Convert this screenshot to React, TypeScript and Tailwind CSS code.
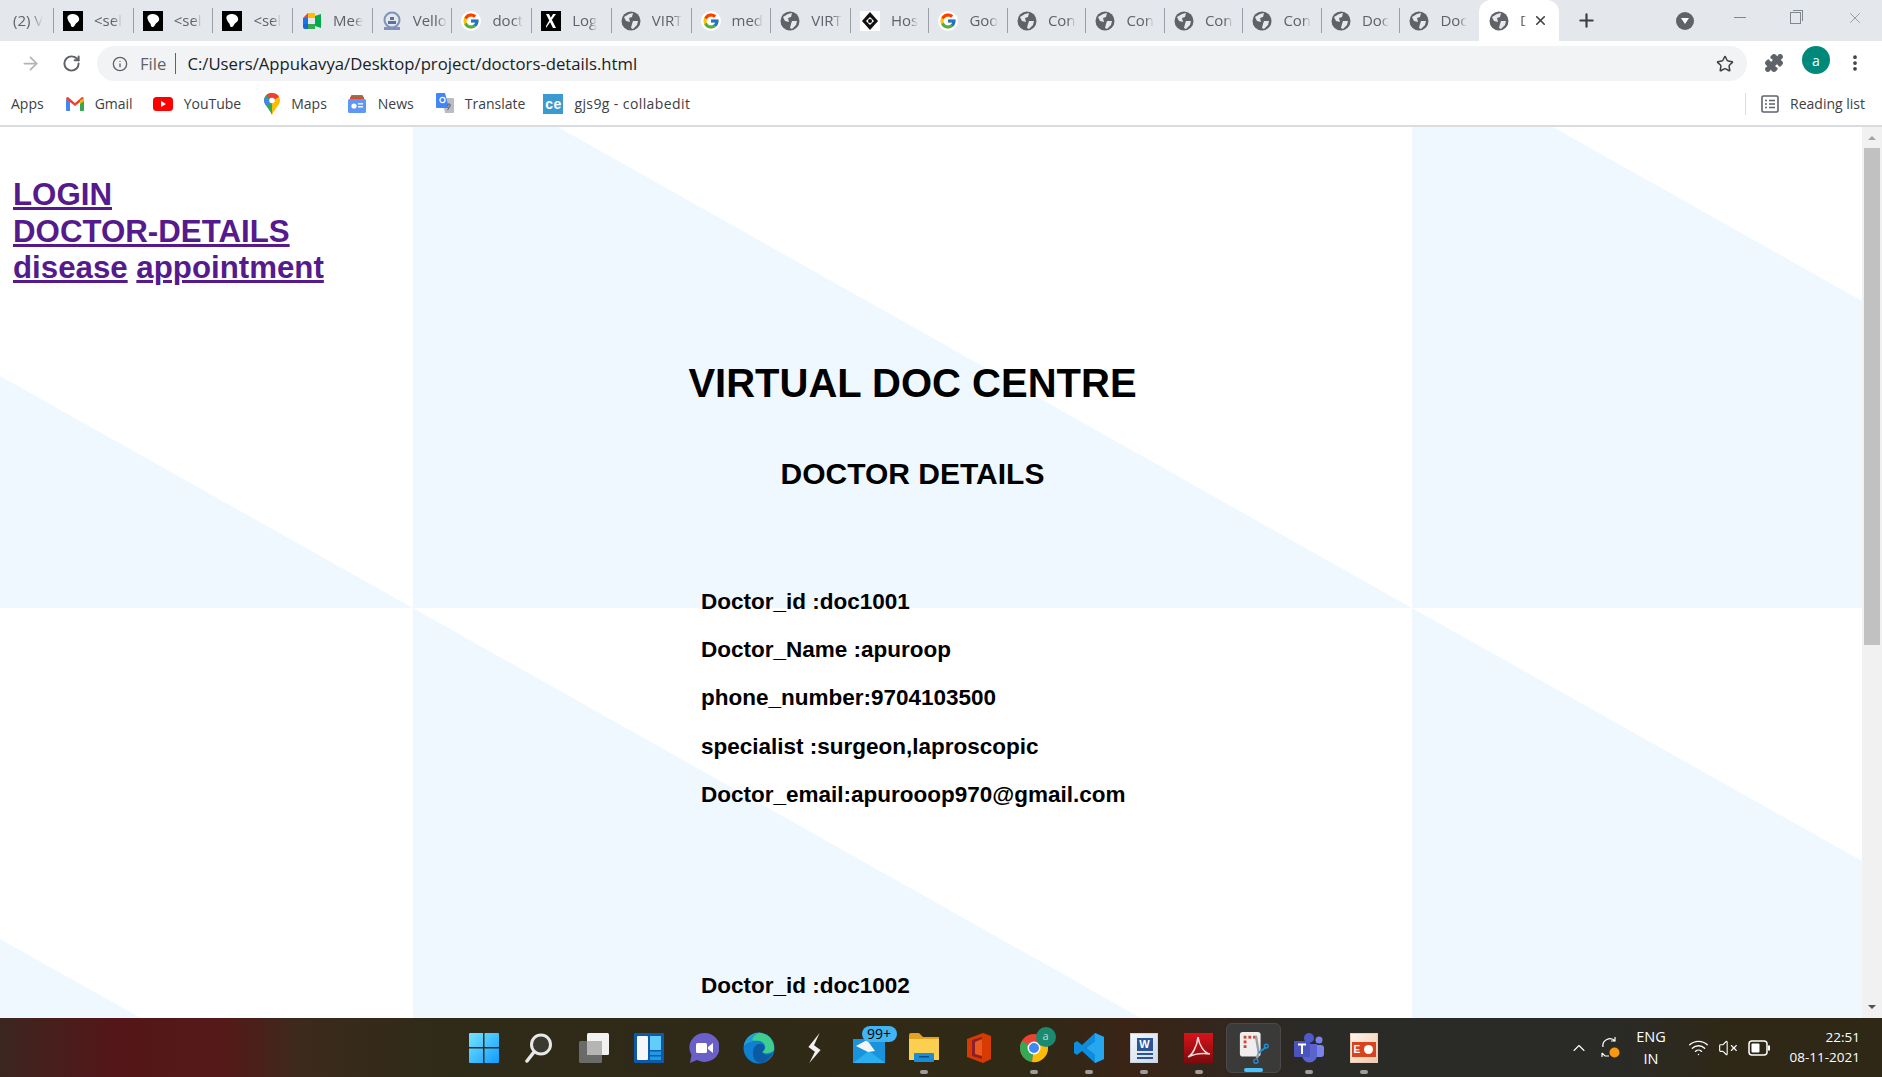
import { ArrowRight, ChevronUp, Info, MoreVertical, Plus, Puzzle, RotateCw, Star, VolumeX, Wifi, X } from "lucide-react";
import { ReactNode } from "react";
import { FcGoogle } from "react-icons/fc";

const chromeFont = "font-['Open_Sans','Noto_Sans',sans-serif]";

function Globe() {
  return (
    <svg viewBox="0 0 20 20" className="h-5 w-5">
      <circle cx="10" cy="10" r="9.5" fill="#5f6368" />
      <path d="M3 6 L8 3 L12 2 L11 6 L8 7 L9 11 L5 10 Z" fill="#e6e8eb" />
      <path d="M12 10 L17 10 L16 14 L12 18 L10 17 L11 13 Z" fill="#e6e8eb" />
    </svg>
  );
}

function BlackMark() {
  return (
    <svg viewBox="0 0 20 20" className="h-5 w-5">
      <rect width="20" height="20" fill="#000" />
      <path d="M6 4 C9 2 15 3 16 7 C17 11 13 11 12 14 C11 16 9 17 8 15 C8 12 6 12 5 9 C4 7 4 5 6 4 Z" fill="#fff" />
    </svg>
  );
}

function MeetIcon() {
  return (
    <svg viewBox="0 0 20 20" className="h-5 w-5">
      <path d="M1 7 L6 2 L6 7 Z" fill="#ea4335" />
      <rect x="6" y="2" width="7" height="5" fill="#fbbc04" />
      <rect x="1" y="7" width="5" height="6" fill="#1a73e8" />
      <path d="M1 13 H6 V18 H3 Q1 18 1 16 Z" fill="#1967d2" />
      <rect x="6" y="13" width="7" height="5" fill="#34a853" />
      <path d="M13 5 L19 3 V17 L13 15 Z" fill="#00ac47" />
    </svg>
  );
}

function CrestIcon() {
  return (
    <svg viewBox="0 0 20 20" className="h-5 w-5">
      <circle cx="10" cy="9" r="7.5" fill="none" stroke="#7f93b8" strokeWidth="2" />
      <path d="M6 10 H14 V13 H6 Z M8 6 H12 V9 H8 Z" fill="#5872a3" />
      <path d="M2 16 H18 V19 H2 Z" fill="#7f93b8" />
    </svg>
  );
}

function XMark() {
  return (
    <svg viewBox="0 0 20 20" className="h-5 w-5">
      <rect width="20" height="20" fill="#000" />
      <path d="M5 3 H8 L15 17 H12 Z M12 3 H15 L5 17 V15 Z" fill="#fff" />
    </svg>
  );
}

function HexMark() {
  return (
    <svg viewBox="0 0 20 20" className="h-5 w-5">
      <rect width="20" height="20" fill="#fff" />
      <path d="M10 1 L18 10 L10 19 L2 10 Z" fill="#111" />
      <path d="M10 6 L14 10 L10 14 L6 10 Z" fill="#fff" />
      <circle cx="10" cy="10" r="2" fill="#111" />
    </svg>
  );
}

function GoogleIcon() {
  return (
    <span className="flex h-5 w-5 items-center justify-center rounded-full bg-white">
      <FcGoogle size={18} />
    </span>
  );
}

interface TabInfo {
  icon: ReactNode;
  title: string;
}

// titles as far as they can be read in the squeezed tabs
const tabs: TabInfo[] = [
  { icon: <BlackMark />, title: "<sel" },
  { icon: <BlackMark />, title: "<sel" },
  { icon: <BlackMark />, title: "<sel" },
  { icon: <MeetIcon />, title: "Mee" },
  { icon: <CrestIcon />, title: "Vello" },
  { icon: <GoogleIcon />, title: "doct" },
  { icon: <XMark />, title: "Log" },
  { icon: <Globe />, title: "VIRT" },
  { icon: <GoogleIcon />, title: "med" },
  { icon: <Globe />, title: "VIRT" },
  { icon: <HexMark />, title: "Hos" },
  { icon: <GoogleIcon />, title: "Goo" },
  { icon: <Globe />, title: "Con" },
  { icon: <Globe />, title: "Con" },
  { icon: <Globe />, title: "Con" },
  { icon: <Globe />, title: "Con" },
  { icon: <Globe />, title: "Doc" },
  { icon: <Globe />, title: "Doc" },
];

function TabBar() {
  return (
    <div className={`flex h-[41px] shrink-0 items-center bg-[#e4e7eb] text-[15px] text-[#5f6368] ${chromeFont}`}>
      <div className="flex h-[25px] w-[54px] items-center border-r border-[#9aa0a6] pl-[13px]">
        <span className="whitespace-nowrap [mask-image:linear-gradient(to_right,black_60%,transparent)]">(2) V</span>
      </div>
      {tabs.map((t, i) => (
        <div key={i} className={`flex h-[25px] shrink-0 items-center gap-[11px] pl-[9px] ${i < 10 ? "w-[79.7px]" : "w-[78.5px]"} ${i < 17 ? "border-r border-[#9aa0a6]" : ""}`}>
          <span className="shrink-0">{t.icon}</span>
          <span className="whitespace-nowrap [mask-image:linear-gradient(to_right,black_70%,transparent)]">{t.title}</span>
        </div>
      ))}
      <div className="flex h-[41px] w-[80px] shrink-0 items-center rounded-t-xl bg-white pl-[10px]">
        <Globe />
        <span className="ml-[11px] w-[6px] text-[#5f6368] [mask-image:linear-gradient(to_right,black_60%,transparent)]">D</span>
        <X size={15} strokeWidth={2.5} className="ml-[7px] text-[#3c4043]" />
      </div>
      <Plus size={21} strokeWidth={2.5} className="ml-[17px] text-[#3c4043]" />
      <div className="ml-[79px] flex h-[18px] w-[18px] items-center justify-center rounded-full bg-[#5f6368]">
        <div className="h-0 w-0 border-x-[4px] border-t-[6px] border-x-transparent border-t-white" />
      </div>
      <div className="mb-[6px] ml-[40px] h-px w-[12px] bg-[#80868b]" />
      <div className="relative mb-[6px] ml-[44px] h-[12px] w-[11px] border border-[#80868b]">
        <div className="absolute -right-[3px] -top-[3px] h-[11px] w-[10px] border-r border-t border-[#80868b]" />
      </div>
      <X size={18} strokeWidth={1} className="mb-[6px] ml-[45px] text-[#80868b]" />
    </div>
  );
}

function Toolbar() {
  return (
    <div className={`flex h-[44px] shrink-0 items-start bg-white pt-[5px] ${chromeFont}`}>
      <ArrowRight size={21} strokeWidth={2} className="ml-[20px] mt-[7px] text-[#b0b3b8]" />
      <RotateCw size={19} strokeWidth={2.5} className="ml-[21px] mt-[8px] text-[#5f6368]" />
      <div className="ml-[16px] flex h-[35px] w-[1650px] items-center rounded-full bg-[#f1f3f4] pl-[15px] text-[16.7px]">
        <Info size={16} strokeWidth={2} className="text-[#5f6368]" />
        <span className="ml-[12px] text-[#5f6368]">File</span>
        <div className="ml-[9px] h-[21px] w-px bg-[#5f6368]" />
        <span className="ml-[11px] text-[#202124]">C:/Users/Appukavya/Desktop/project/doctors-details.html</span>
        <Star size={18} strokeWidth={2} className="ml-auto mr-[13px] text-[#3c4043]" />
      </div>
      <Puzzle size={20} fill="#5f6368" strokeWidth={1.5} className="ml-[17px] mt-[7px] text-[#5f6368]" />
      <div className="ml-[18px] flex h-[28px] w-[28px] items-center justify-center rounded-full bg-[#00897b] text-[14px] text-white">a</div>
      <MoreVertical size={20} strokeWidth={2.5} className="ml-[15px] mt-[7px] text-[#3c4043]" />
    </div>
  );
}

function GmailIcon() {
  return (
    <svg viewBox="0 0 18 14" className="h-[14px] w-[18px]">
      <path d="M0 2 L4 4 V14 H1 Q0 14 0 13 Z" fill="#4285f4" />
      <path d="M14 4 L18 2 V13 Q18 14 17 14 H14 Z" fill="#34a853" />
      <path d="M0 2 Q0 0 2 0 L9 6 L16 0 Q18 0 18 2 L9 9 Z" fill="#ea4335" />
      <path d="M14 3.5 L18 1 V4 L14 7 Z" fill="#fbbc04" />
    </svg>
  );
}

function YoutubeIcon() {
  return (
    <svg viewBox="0 0 20 14" className="h-[14px] w-5">
      <rect width="20" height="14" rx="3.5" fill="#ff0000" />
      <path d="M8 4 L13 7 L8 10 Z" fill="#fff" />
    </svg>
  );
}

function MapsIcon() {
  return (
    <svg viewBox="0 0 16 22" className="h-[22px] w-4">
      <path d="M8 0 C3 0 0 3.5 0 7.5 C0 12 5 15 8 22 Z" fill="#34a853" />
      <path d="M8 0 C13 0 16 3.5 16 7.5 C16 12 11 15 8 22 Z" fill="#fbbc04" />
      <path d="M2 2.5 C4 0.5 6 0 8 0 C11 0 14 1.5 15 4 L8 8 Z" fill="#ea4335" />
      <path d="M1 4 L8 8 L3 13 C1 11 0 9 0 7.5 Z" fill="#4285f4" />
      <circle cx="8" cy="7.5" r="2.8" fill="#fff" />
    </svg>
  );
}

function NewsIcon() {
  return (
    <svg viewBox="0 0 20 20" className="h-5 w-5">
      <rect x="4" y="1" width="12" height="8" rx="1" fill="#34a853" />
      <rect x="3" y="2.5" width="14" height="6" rx="1" fill="#ea4335" />
      <rect x="1" y="5" width="18" height="14" rx="1.5" fill="#5e97f6" />
      <rect x="11" y="9" width="5" height="1.6" fill="#e3f0ff" />
      <rect x="11" y="12" width="5" height="1.6" fill="#e3f0ff" />
      <circle cx="7" cy="12" r="2.6" fill="#fff" />
    </svg>
  );
}

function TranslateIcon() {
  return (
    <svg viewBox="0 0 18 22" className="h-[22px] w-[18px]">
      <path d="M6 5 H17 Q18 5 18 6 V19 Q18 20 17 20 H9 Z" fill="#b9bdc2" />
      <path d="M1 0 H9 L13 15 H1 Q0 15 0 14 V1 Q0 0 1 0 Z" fill="#4285f4" />
      <circle cx="6.5" cy="7" r="2.6" fill="none" stroke="#fff" strokeWidth="1.2" />
      <path d="M11 12 L15 12 M13 10 V12 M11.5 17 L14.5 12.5" stroke="#5f6368" strokeWidth="1" fill="none" />
    </svg>
  );
}

function BookmarksBar() {
  const items: { icon: ReactNode; label: string; gap: string }[] = [
    { icon: <GmailIcon />, label: "Gmail", gap: "ml-[22px]" },
    { icon: <YoutubeIcon />, label: "YouTube", gap: "ml-[20px]" },
    { icon: <MapsIcon />, label: "Maps", gap: "ml-[23px]" },
    { icon: <NewsIcon />, label: "News", gap: "ml-[20px]" },
    { icon: <TranslateIcon />, label: "Translate", gap: "ml-[22px]" },
    {
      icon: (
        <span className="flex h-5 w-5 items-center justify-center bg-[#3b9bcf] font-['Liberation_Sans',sans-serif] text-[14px] font-bold leading-none text-white">
          ce
        </span>
      ),
      label: "gjs9g - collabedit",
      gap: "ml-[18px] tracking-[0.4px]",
    },
  ];
  return (
    <div className={`flex h-[42px] shrink-0 items-center border-b-2 border-[#dadce0] bg-white pb-[3px] pl-[11px] text-[14px] text-[#3c4043] ${chromeFont}`}>
      <span>Apps</span>
      {items.map((it) => (
        <div key={it.label} className={`flex items-center gap-[11px] ${it.gap}`}>
          {it.icon}
          <span>{it.label}</span>
        </div>
      ))}
      <div className="ml-auto flex h-[22px] items-center border-l border-[#dadce0] pl-[15px] pr-[17px]">
        <svg viewBox="0 0 18 18" className="h-[18px] w-[18px]">
          <rect x="1" y="1" width="16" height="16" rx="1.5" fill="none" stroke="#5f6368" strokeWidth="1.6" />
          <path d="M4 5.5 H6 M8 5.5 H14 M4 9 H6 M8 9 H14 M4 12.5 H6 M8 12.5 H14" stroke="#5f6368" strokeWidth="1.4" />
        </svg>
        <span className="ml-[11px]">Reading list</span>
      </div>
    </div>
  );
}

function PageBackground() {
  return (
    <svg viewBox="0 127 1862 891" className="absolute inset-0 h-full w-full">
      <g fill="#f0f8ff">
        <polygon points="0,376 413,608 0,608" />
        <polygon points="413,127 558,127 1412,608 413,608" />
        <polygon points="1412,127 1553,127 1862,301 1862,608 1412,608" />
        <polygon points="0,939 141,1018 0,1018" />
        <polygon points="413,608 1141,1018 413,1018" />
        <polygon points="1412,608 1862,861 1862,1018 1412,1018" />
      </g>
    </svg>
  );
}

const doctor = [
  "Doctor_id :doc1001",
  "Doctor_Name :apuroop",
  "phone_number:9704103500",
  "specialist :surgeon,laproscopic",
  "Doctor_email:apurooop970@gmail.com",
];

function Page() {
  const link = "text-[#551a8b] underline";
  return (
    <div className="relative flex-1 overflow-hidden bg-white font-['Liberation_Sans',Arial,sans-serif] font-bold text-black">
      <PageBackground />
      <div className="relative">
        <nav className="pl-[13px] pt-[50px] text-[31.25px] leading-[36.5px]">
          <div><a className={link}>LOGIN</a></div>
          <div><a className={link}>DOCTOR-DETAILS</a></div>
          <div>
            <a className={link}>disease</a> <a className={link}>appointment</a>
          </div>
        </nav>
        <div className="ml-[413px] w-[999px]">
          <h1 className="mt-[73px] text-center text-[40px] leading-[46px]">VIRTUAL DOC CENTRE</h1>
          <h2 className="mt-[51px] text-center text-[30px] leading-[34.5px]">DOCTOR DETAILS</h2>
          <div className="ml-[288px] mt-[96.5px] flex flex-col gap-[20.8px] text-[22.5px] leading-[27.67px]">
            {doctor.map((line) => (
              <p key={line}>{line}</p>
            ))}
          </div>
          <p className="ml-[288px] mt-[163.3px] text-[22.5px] leading-[27.67px]">Doctor_id :doc1002</p>
        </div>
      </div>
    </div>
  );
}

function Scrollbar() {
  return (
    <div className="flex w-5 shrink-0 flex-col items-center bg-[#f1f1f1]">
      <div className="mt-[9px] h-0 w-0 border-x-[4px] border-b-[4px] border-x-transparent border-b-[#a3a3a3]" />
      <div className="mt-[8px] h-[497px] w-4 bg-[#c1c1c1]" />
      <div className="mt-auto mb-[9px] h-0 w-0 border-x-[4px] border-t-[4px] border-x-transparent border-t-[#505050]" />
    </div>
  );
}

function StartIcon() {
  return (
    <svg viewBox="0 0 30 30" className="h-[30px] w-[30px]">
      <defs>
        <linearGradient id="st" x1="0" y1="0" x2="1" y2="1">
          <stop offset="0" stopColor="#76e4ff" />
          <stop offset="1" stopColor="#0f9cff" />
        </linearGradient>
      </defs>
      <path d="M0 1 Q0 0 1 0 H14 V14 H0 Z M15.5 0 H29 Q30 0 30 1 V14 H15.5 Z M0 15.5 H14 V30 H1 Q0 30 0 29 Z M15.5 15.5 H30 V29 Q30 30 29 30 H15.5 Z" fill="url(#st)" />
    </svg>
  );
}

function SearchIcon() {
  return (
    <svg viewBox="0 0 28 30" className="h-[30px] w-[28px]">
      <circle cx="16" cy="11.5" r="9.5" fill="#3b3a30" stroke="#e8e8e8" strokeWidth="3" />
      <path d="M9 19 L2 28" stroke="#e8e8e8" strokeWidth="3.5" strokeLinecap="round" />
    </svg>
  );
}

function TaskViewIcon() {
  return (
    <svg viewBox="0 0 30 30" className="h-[30px] w-[30px]">
      <rect x="0" y="8" width="23" height="22" rx="1.5" fill="#6a6a68" />
      <rect x="8" y="0" width="22" height="22" rx="1.5" fill="#f2f2f2" />
      <rect x="8" y="8" width="15" height="14" fill="#b5b5b3" />
    </svg>
  );
}

function WidgetsIcon() {
  return (
    <svg viewBox="0 0 30 30" className="h-[30px] w-[30px]">
      <rect width="30" height="30" rx="1" fill="#0d5aa7" />
      <rect x="3" y="3" width="11" height="24" rx="1" fill="#f5f7fa" />
      <rect x="16" y="3" width="11" height="14" fill="#62cdfb" />
      <rect x="16" y="18.5" width="11" height="3.5" fill="#1c9be6" />
      <rect x="16" y="23.5" width="11" height="3.5" fill="#1c9be6" />
    </svg>
  );
}

function ChatIcon() {
  return (
    <svg viewBox="0 0 30 30" className="h-[30px] w-[30px]">
      <path d="M15 0 A15 14.5 0 1 1 8 27 L1 30 L2.5 22 A15 14.5 0 0 1 15 0 Z" fill="#6b5fc9" />
      <rect x="7" y="10" width="11" height="10" rx="1.5" fill="#fff" />
      <path d="M19 14 L24 10 V20 L19 16 Z" fill="#fff" />
    </svg>
  );
}

function EdgeIcon() {
  return (
    <svg viewBox="0 0 32 32" className="h-[32px] w-[32px]">
      <circle cx="16" cy="16" r="15.5" fill="#0f7fcf" />
      <path d="M1 14 C3 4 12 0 18 1 C26 2 32 9 31 18 C28 22 22 22 19 20 C24 17 23 11 17 9 C10 8 3 10 1 14 Z" fill="#3ecf8e" />
      <path d="M1 14 C3 5 11 1 16 1 C9 4 8 9 11 9 C7 9 3 10 1 14 Z" fill="#1d9be0" />
      <path d="M10 21 C10 14 15 11 19 12 C23 14 22 18 19 20 C22 24 27 23 30 20 C27 28 21 31 17 31 C12 30 10 26 10 21 Z" fill="#0c59a4" />
    </svg>
  );
}

function StarkIcon() {
  return (
    <svg viewBox="0 0 14 32" className="h-[30px] w-[14px]">
      <path d="M13 0 L1 15 L8 20 L2 32 L14 18 L7 13 Z" fill="#f2f2f2" />
    </svg>
  );
}

function MailIcon() {
  return (
    <span className="relative block h-[30px] w-[32px]">
      <svg viewBox="0 0 32 26" className="absolute bottom-0 h-[26px] w-[32px]">
        <rect y="2" width="32" height="24" fill="#1993dc" />
        <path d="M0 26 L16 14 L32 26 Z" fill="#2ab0ee" />
        <path d="M3 9 L14 3 L22 14 L15 15 Z" fill="#f4f4f4" />
      </svg>
      <span className="absolute -top-[7px] left-[9px] flex h-[16px] w-[35px] items-center justify-center rounded-full bg-[#40b4f5] font-['Open_Sans',sans-serif] text-[14px] text-black">
        99+
      </span>
    </span>
  );
}

function FolderIcon() {
  return (
    <svg viewBox="0 0 30 29" className="h-[29px] w-[30px]">
      <path d="M0 2 Q0 0 2 0 H10 L14 4 H30 V27 H0 Z" fill="#e0a420" />
      <rect y="6" width="30" height="21" fill="#fbcf4f" />
      <rect x="5" y="20" width="20" height="9" rx="1" fill="#1a8dd8" />
      <rect x="10" y="23" width="10" height="1.5" fill="#0d4d8a" />
    </svg>
  );
}

function OfficeIcon() {
  return (
    <svg viewBox="0 0 24 30" className="h-[30px] w-[24px]">
      <path d="M0 6 L16 0 L24 3 V26 L16 30 L0 24 Z" fill="#d83b01" />
      <path d="M5 7 L15 4 V26 L5 23 Z" fill="#8d1f2a" />
      <path d="M8 9 L15 6 V23 L8 21 Z" fill="#e85a1e" />
    </svg>
  );
}

function ChromeIcon() {
  return (
    <span className="relative block h-[30px] w-[30px]">
      <svg viewBox="0 0 30 30" className="h-[30px] w-[30px]">
        <circle cx="15" cy="15" r="14" fill="#ea4335" />
        <path d="M15 15 L3 8 A14 14 0 0 0 13 29 Z" fill="#34a853" />
        <path d="M15 15 L28 10 A14 14 0 0 1 13 29 Z" fill="#fbbc04" />
        <circle cx="15" cy="15" r="6.5" fill="#fff" />
        <circle cx="15" cy="15" r="5" fill="#4285f4" />
      </svg>
      <span className="absolute -right-[7px] -top-[6px] flex h-[20px] w-[20px] items-center justify-center rounded-full bg-[#1a8a70] font-['Open_Sans',sans-serif] text-[11px] text-white/70">
        a
      </span>
    </span>
  );
}

function VsCodeIcon() {
  return (
    <svg viewBox="0 0 30 30" className="h-[30px] w-[30px]">
      <path d="M21 0 L30 4 V26 L21 30 L8 18 L3 22 L0 20 V10 L3 8 L8 12 Z M21 8 L12 15 L21 22 Z" fill="#0c8ee0" />
      <path d="M21 0 L30 4 V26 L21 30 Z M21 8 V22 L12 15 Z" fill="#26a8f0" fillRule="evenodd" />
    </svg>
  );
}

function WordIcon() {
  return (
    <span className="relative block h-[30px] w-[28px] border border-[#c9d3e2] bg-[linear-gradient(135deg,#f5f8fc,#cfd9e8)]">
      <span className="absolute left-[6px] top-[4px] flex h-[13px] w-[16px] items-center justify-center bg-[#2a5699] font-['Liberation_Sans',sans-serif] text-[11px] font-bold text-white">
        W
      </span>
      <span className="absolute left-[6px] top-[19px] h-[2px] w-[16px] bg-[#2a5699]" />
      <span className="absolute left-[6px] top-[23px] h-[2px] w-[16px] bg-[#2a5699]" />
    </span>
  );
}

function AcrobatIcon() {
  return (
    <svg viewBox="0 0 29 30" className="h-[30px] w-[29px]">
      <defs>
        <linearGradient id="ac" x1="0" y1="0" x2="0" y2="1">
          <stop offset="0" stopColor="#d8141a" />
          <stop offset="1" stopColor="#7c0a0c" />
        </linearGradient>
      </defs>
      <rect width="29" height="30" fill="url(#ac)" />
      <path d="M4 24 C8 22 13 14 14 4 C15 12 20 20 26 21 C20 20 12 20 4 24 Z" fill="none" stroke="#f4d9d9" strokeWidth="1.6" />
    </svg>
  );
}

function SnipIcon() {
  return (
    <svg viewBox="0 0 30 34" className="h-[32px] w-[30px]">
      <rect width="22" height="26" rx="3" fill="#eeeeee" />
      <rect x="4" y="4" width="3" height="3" fill="#d4452f" />
      <rect x="9" y="4" width="3" height="3" fill="#d4452f" />
      <rect x="14" y="4" width="3" height="3" fill="#d4452f" />
      <rect x="4" y="9" width="3" height="3" fill="#d4452f" />
      <rect x="4" y="14" width="3" height="3" fill="#d4452f" />
      <path d="M17 4 L20 22 L18 28" stroke="#9aa0a6" strokeWidth="2.5" fill="none" />
      <path d="M28 16 L20 22" stroke="#1b8fd8" strokeWidth="2" />
      <circle cx="28" cy="15" r="2" fill="none" stroke="#1b8fd8" strokeWidth="1.5" />
      <circle cx="17" cy="31" r="2.2" fill="none" stroke="#1b8fd8" strokeWidth="1.5" />
    </svg>
  );
}

function TeamsIcon() {
  return (
    <svg viewBox="0 0 30 30" className="h-[30px] w-[30px]">
      <circle cx="25" cy="7" r="3.5" fill="#7b83eb" />
      <rect x="20" y="12" width="10" height="12" rx="3" fill="#7b83eb" />
      <circle cx="15" cy="5" r="5" fill="#5059c9" />
      <path d="M8 11 H23 V22 A7.5 7.5 0 0 1 8 22 Z" fill="#5b63cf" />
      <rect x="0" y="8" width="16" height="16" rx="1" fill="#4b53bc" />
      <path d="M4 11.5 H12 M8 11.5 V21" stroke="#fff" strokeWidth="2" />
    </svg>
  );
}

function PptIcon() {
  return (
    <span className="relative block h-[30px] w-[28px] border border-[#eccbb8] bg-[linear-gradient(135deg,#fdf3ea,#f2c9aa)]">
      <span className="absolute left-px top-[8px] h-[15px] w-[24px] bg-[#d8431f]" />
      <span className="absolute left-[3px] top-[9px] font-['Liberation_Sans',sans-serif] text-[10px] font-bold leading-[13px] text-white">E</span>
      <span className="absolute left-[13px] top-[11px] h-[9px] w-[9px] rounded-full bg-white" />
    </span>
  );
}

const taskbarApps: { icon: ReactNode; dot?: boolean; active?: boolean }[] = [
  { icon: <StartIcon /> },
  { icon: <SearchIcon /> },
  { icon: <TaskViewIcon /> },
  { icon: <WidgetsIcon /> },
  { icon: <ChatIcon /> },
  { icon: <EdgeIcon /> },
  { icon: <StarkIcon /> },
  { icon: <MailIcon /> },
  { icon: <FolderIcon />, dot: true },
  { icon: <OfficeIcon /> },
  { icon: <ChromeIcon />, dot: true },
  { icon: <VsCodeIcon />, dot: true },
  { icon: <WordIcon />, dot: true },
  { icon: <AcrobatIcon />, dot: true },
  { icon: <SnipIcon />, active: true },
  { icon: <TeamsIcon />, dot: true },
  { icon: <PptIcon />, dot: true },
];

function Taskbar() {
  return (
    <div className={`flex h-[59px] shrink-0 items-center bg-[linear-gradient(to_right,#3c2620_0%,#541619_6%,#541a18_12%,#3c2a1c_16%,#2e2b18_24%,#302916_55%,#3a2416_60%,#34261c_64%,#2a2a28_70%,#2a2a26_86%,#2f2817_92%,#2f2817_100%)] text-white ${chromeFont}`}>
      <div className="flex pl-[456px]">
        {taskbarApps.map((app, i) => (
          <div key={i} className={`relative flex h-[50px] w-[55px] items-center justify-center ${app.active ? "rounded-md border border-[#4a4a48] bg-[#3a3a38]" : ""}`}>
            {app.icon}
            {app.dot && <span className="absolute bottom-[-1px] h-[4px] w-[8px] rounded-full bg-[#9d9d9d]" />}
            {app.active && <span className="absolute bottom-0 h-[4px] w-[19px] rounded-full bg-[#4cc2ff]" />}
          </div>
        ))}
      </div>
      <ChevronUp size={20} strokeWidth={1.3} className="ml-[178px]" />
      <svg viewBox="0 0 20 24" className="ml-[11px] h-[24px] w-[20px]">
        <path d="M3 11 A7 7 0 0 1 15 5 M15 1 V5 H11" fill="none" stroke="#fff" strokeWidth="1.2" />
        <path d="M2 17 L5 20 H9 M2 17 V21" fill="none" stroke="#fff" strokeWidth="1.2" />
        <circle cx="14.5" cy="16.5" r="5" fill="#f79a12" />
      </svg>
      <div className="ml-[14px] flex w-[34px] flex-col items-center text-[14.5px] leading-[22px]">
        <span>ENG</span>
        <span>IN</span>
      </div>
      <Wifi size={21} strokeWidth={1.6} className="ml-[20px]" />
      <VolumeX size={20} strokeWidth={1.3} className="ml-[9px]" />
      <svg viewBox="0 0 22 16" className="ml-[10px] h-[16px] w-[22px]">
        <rect x="1" y="1" width="18" height="14" rx="3" fill="none" stroke="#fff" strokeWidth="1.5" />
        <rect x="3.5" y="3.5" width="8" height="9" rx="1" fill="#fff" />
        <rect x="20" y="5.5" width="2" height="5" fill="#fff" />
      </svg>
      <div className="mb-[2px] ml-auto flex flex-col items-end pr-[22px] text-[13.5px] leading-[20px]">
        <span>22:51</span>
        <span>08-11-2021</span>
      </div>
    </div>
  );
}

export default function App() {
  return (
    <div className="flex h-screen w-full flex-col overflow-hidden">
      <TabBar />
      <Toolbar />
      <BookmarksBar />
      <div className="flex min-h-0 flex-1">
        <Page />
        <Scrollbar />
      </div>
      <Taskbar />
    </div>
  );
}
